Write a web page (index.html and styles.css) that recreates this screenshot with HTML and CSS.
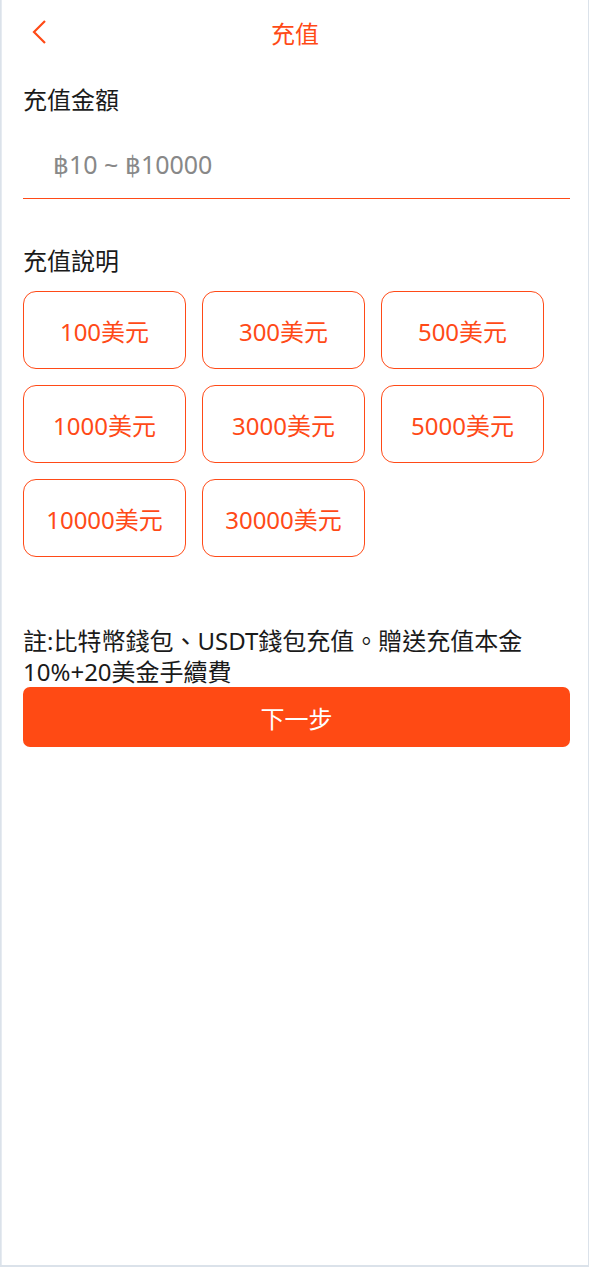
FILE: index.html
```html
<!DOCTYPE html>
<html lang="zh-Hant">
<head>
<meta charset="utf-8">
<title>充值</title>
<link rel="stylesheet" href="styles.css">
</head>
<body>
<div class="page">
  <header class="topbar">
    <span class="back" aria-label="返回">
      <svg width="16" height="26" viewBox="0 0 16 26"><path d="M14 2 L3 13 L14 24" fill="none" stroke="#ff4a17" stroke-width="2.2"/></svg>
    </span>
    <h1 class="title">充值</h1>
  </header>
  <main class="content">
    <div class="label label-amount">充值金額</div>
    <div class="field">
      <input class="amount" type="text" placeholder="฿10 ~ ฿10000">
    </div>
    <div class="label label-desc">充值說明</div>
    <div class="options">
      <div class="opt">100美元</div>
      <div class="opt">300美元</div>
      <div class="opt">500美元</div>
      <div class="opt">1000美元</div>
      <div class="opt">3000美元</div>
      <div class="opt">5000美元</div>
      <div class="opt">10000美元</div>
      <div class="opt">30000美元</div>
    </div>
    <p class="note">註:比特幣錢包、USDT錢包充值。贈送充值本金10%+20美金手續費</p>
    <button class="next">下一步</button>
  </main>
</div>
</body>
</html>
```

FILE: styles.css
```css
html, body {
  margin: 0;
  padding: 0;
  background: #dbe2ea;
}
body {
  font-family: "Noto Sans", "Noto Sans CJK TC", sans-serif;
  color: #1a1a1a;
}
.page {
  box-sizing: border-box;
  width: 587px;
  height: 1265px;
  margin-left: 1px;
  background: #fff;
  border-left: 1px solid #e6ebf1;
}
.topbar {
  position: relative;
  height: 68px;
  display: flex;
  align-items: center;
  justify-content: center;
}
.back {
  position: absolute;
  left: 29px;
  top: 19px;
  display: block;
  line-height: 0;
}
.title {
  margin: 0;
  font-size: 24px;
  font-weight: 400;
  color: #ff4a17;
  line-height: 1;
}
.content {
  padding: 0 18px 0 21px;
}
.label {
  font-size: 24px;
  line-height: 34px;
  color: #1a1a1a;
}
.label-amount {
  margin-top: 15px;
}
.field {
  border-bottom: 1px solid #ff4a17;
  height: 82px;
  box-sizing: border-box;
  padding-top: 12px;
  display: flex;
  align-items: center;
}
.amount {
  border: 0;
  outline: none;
  width: 100%;
  padding: 0 0 0 30px;
  font-family: inherit;
  font-size: 25px;
  color: #1a1a1a;
  background: transparent;
}
.amount::placeholder {
  color: #888;
}
.label-desc {
  margin-top: 45px;
}
.options {
  margin-top: 13px;
  display: grid;
  grid-template-columns: repeat(3, 163px);
  gap: 16px;
}
.opt {
  box-sizing: border-box;
  height: 78px;
  border: 1px solid #ff4a17;
  border-radius: 13px;
  display: flex;
  align-items: center;
  justify-content: center;
  font-size: 24px;
  color: #ff4a17;
}
.note {
  margin: 68px 0 0;
  font-size: 24px;
  line-height: 31px;
  color: #1a1a1a;
}
.next {
  display: block;
  width: 100%;
  height: 60px;
  margin-top: 0;
  border: 0;
  border-radius: 7px;
  background: #ff4a14;
  color: #fff;
  font-family: inherit;
  font-size: 24px;
}
```
